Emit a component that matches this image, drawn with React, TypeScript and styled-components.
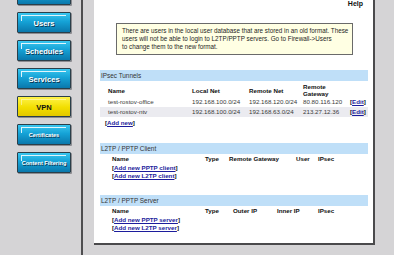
import { FC } from "react";
import styled, { createGlobalStyle, css } from "styled-components";

const GlobalStyle = createGlobalStyle`
  html, body {
    margin: 0;
    padding: 0;
    background: #d5d4d6;
    overflow: hidden;
  }
  body {
    font-family: "Liberation Sans", Arial, sans-serif;
  }
`;

type NavItem = { label: string; small?: boolean; active?: boolean };

// the first button is scrolled out of view, only its bottom edge shows
const navItems: NavItem[] = [
  { label: "" },
  { label: "Users" },
  { label: "Schedules" },
  { label: "Services" },
  { label: "VPN", active: true },
  { label: "Certificates", small: true },
  { label: "Content Filtering", small: true },
];

const noticeLines = [
  "There are users in the local user database that are stored in an old format. These",
  "users will not be able to login to L2TP/PPTP servers. Go to Firewall->Users",
  "to change them to the new format.",
];

const tunnels = [
  { name: "test-rostov-office", local: "192.168.100.0/24", remote: "192.168.120.0/24", gateway: "80.80.116.120" },
  { name: "test-rostov-ntv", local: "192.168.100.0/24", remote: "192.168.63.0/24", gateway: "213.27.12.36" },
];

const BracketLink: FC<{ label: string }> = ({ label }) => (
  <LinkLine>
    [<LinkText href="#">{label}</LinkText>]
  </LinkLine>
);

const App: FC = () => (
  <>
    <GlobalStyle />
    <Page>
      <Sidebar>
        {navItems.map((item, idx) => (
          <NavButton key={`nav-${idx}`} $active={item.active} $small={item.small}>
            {item.label}
          </NavButton>
        ))}
      </Sidebar>
      <Content>
        <Panel>
          <HelpRow>Help</HelpRow>
          <Notice>
            {noticeLines.map((line) => <NoticeLine key={line}>{line}</NoticeLine>)}
          </Notice>

          <Section>
            <SectionBar>IPsec Tunnels</SectionBar>
            <TunnelHeader>
              <span>Name</span>
              <span>Local Net</span>
              <span>Remote Net</span>
              <span>Remote<br />Gateway</span>
              <span />
            </TunnelHeader>
            {tunnels.map((t, idx) => (
              <TunnelRow key={t.name} $shaded={idx % 2 === 1}>
                <span>{t.name}</span>
                <span>{t.local}</span>
                <span>{t.remote}</span>
                <span>{t.gateway}</span>
                <BracketLink label="Edit" />
              </TunnelRow>
            ))}
            <AddRow>
              <BracketLink label="Add new" />
            </AddRow>
          </Section>

          <Section>
            <SectionBar>L2TP / PPTP Client</SectionBar>
            <ClientHeader>
              <span>Name</span>
              <span>Type</span>
              <span>Remote Gateway</span>
              <span>User</span>
              <span>IPsec</span>
            </ClientHeader>
            <LinkList>
              <BracketLink label="Add new PPTP client" />
              <BracketLink label="Add new L2TP client" />
            </LinkList>
          </Section>

          <Section>
            <SectionBar>L2TP / PPTP Server</SectionBar>
            <ServerHeader>
              <span>Name</span>
              <span>Type</span>
              <span>Outer IP</span>
              <span>Inner IP</span>
              <span>IPsec</span>
            </ServerHeader>
            <LinkList>
              <BracketLink label="Add new PPTP server" />
              <BracketLink label="Add new L2TP server" />
            </LinkList>
          </Section>
        </Panel>
      </Content>
    </Page>
  </>
);

export default App;

const Page = styled.div`
  display: flex;
  width: 394px;
  height: 255px;
  overflow: hidden;
`;

const Sidebar = styled.div`
  flex: none;
  width: 64px;
  padding-left: 17px;
  border-right: 2px solid #4e4e50;
  display: flex;
  flex-direction: column;
  gap: 7px;
  margin-top: -16px;
`;

const NavButton = styled.div<{ $active?: boolean; $small?: boolean }>`
  position: relative;
  box-sizing: border-box;
  width: 54px;
  height: 21px;
  display: flex;
  align-items: center;
  justify-content: center;
  border: 1px solid #2a3f4a;
  border-radius: 1px;
  box-shadow: 1px 1px 0 #8c8c90;
  font-weight: bold;
  font-size: ${({ $small }) => ($small ? "5.6px" : "7.6px")};
  white-space: nowrap;
  padding-top: 1px;

  ${({ $active }) => $active
    ? css`
      background: linear-gradient(#fff34a, #f2de00 55%, #e2c800);
      color: #111;
    `
    : css`
      background: linear-gradient(#38c6ef, #15a2d6 45%, #0a78ac);
      color: #fff;
      text-shadow: 1px 1px 0 #0b3550;
    `}

  &::before {
    content: "";
    position: absolute;
    top: 2px;
    left: 3px;
    right: 4px;
    height: 5px;
    border-top: 1px solid rgba(255, 255, 255, 0.85);
    border-left: 1px solid rgba(255, 255, 255, 0.85);
    opacity: ${({ $active }) => ($active ? 0.5 : 1)};
  }
`;

const Content = styled.div`
  flex: 1;
  padding-left: 11px;
`;

const Panel = styled.div`
  box-sizing: border-box;
  width: 281px;
  height: 245px;
  background: #fff;
  border-right: 2px solid #4a4a4c;
  border-bottom: 2px solid #4a4a4c;
  padding: 0 5px 0 6px;
  display: flex;
  flex-direction: column;
`;

const HelpRow = styled.div`
  margin-top: 0;
  padding-right: 5px;
  text-align: right;
  font-weight: bold;
  font-size: 7px;
  line-height: 7px;
  color: #111;
`;

const Notice = styled.div`
  margin: 16px 15px 0 16px;
  padding: 3px 5px;
  border: 1px solid #6a6a6a;
  background: #ffffe3;
  font-size: 6.3px;
  line-height: 8px;
  color: #1e1e1e;
`;

const NoticeLine = styled.div`
  white-space: nowrap;
`;

const Section = styled.div`
  margin-top: 15px;
  font-size: 6.2px;
  color: #3a3a3a;
`;

const SectionBar = styled.div`
  height: 11px;
  line-height: 11px;
  padding-left: 1px;
  background: #bfdff8;
  color: #333;
  font-size: 6.4px;
`;

const tunnelColumns = css`
  display: grid;
  grid-template-columns: 84px 57px 54px 47px auto;
  padding-left: 8px;
  align-items: center;
`;

const TunnelHeader = styled.div`
  ${tunnelColumns};
  margin-top: 2px;
  height: 14px;
  line-height: 7px;
  font-weight: bold;
  color: #111;
`;

const TunnelRow = styled.div<{ $shaded?: boolean }>`
  ${tunnelColumns};
  height: 10px;
  line-height: 10px;
  background: ${({ $shaded }) => ($shaded ? "#ebebf0" : "transparent")};
`;

const AddRow = styled.div`
  padding-left: 5px;
  margin-top: 1px;
  line-height: 10px;
`;

const ClientHeader = styled.div`
  display: grid;
  grid-template-columns: 93px 24px 67px 22px auto;
  padding-left: 12px;
  height: 10px;
  line-height: 10px;
  font-weight: bold;
  color: #111;
`;

const ServerHeader = styled(ClientHeader)`
  grid-template-columns: 93px 28px 44px 41px auto;
`;

const LinkList = styled.div`
  padding-left: 12px;
  display: flex;
  flex-direction: column;
  line-height: 8px;
`;

const LinkLine = styled.span`
  font-weight: bold;
  color: #111;
  white-space: nowrap;
`;

const LinkText = styled.a`
  color: #1c1c9c;
  text-decoration: underline;
`;
